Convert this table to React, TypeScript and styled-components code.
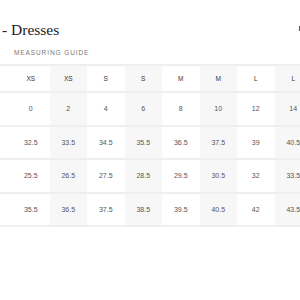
import React from "react";
import styled, { createGlobalStyle } from "styled-components";

const Global = createGlobalStyle`
	html, body {
		margin: 0;
		padding: 0;
		background: #ffffff;
		width: 300px;
		height: 300px;
		overflow: hidden;
	}
`;

const Page = styled.div`
	width: 300px;
	height: 300px;
	overflow: hidden;
	font-family: "Liberation Sans", Arial, sans-serif;
`;

const Head = styled.div`
	display: flex;
	justify-content: space-between;
	align-items: flex-start;
	padding: 20px 0 0 2px;
`;

const Title = styled.h1`
	margin: 0;
	font-family: "Liberation Serif", "Times New Roman", serif;
	font-weight: normal;
	font-size: 15.5px;
	line-height: 20px;
	color: #222;
`;

const Close = styled.span`
	display: block;
	width: 1px;
	height: 5px;
	margin-top: 6px;
	background: #555;
`;

const Guide = styled.div`
	margin: 9px 0 0 14px;
	font-size: 6.5px;
	letter-spacing: 0.9px;
	line-height: 8px;
	color: #777;
`;

const Scroller = styled.div`
	margin-top: 7px;
	width: 300px;
	overflow: hidden;
`;

const Table = styled.table`
	border-collapse: collapse;
	table-layout: fixed;
	width: 312px;
	border-top: 2px solid #efefef;
`;

const Row = styled.tr<{ $head?: boolean }>`
	height: ${(p) => (p.$head ? "27px" : "33.5px")};
	border-bottom: 2px solid #efefef;
`;

const Lead = styled.td`
	width: 12px;
	padding: 0;
`;

const Cell = styled.td<{ $shade?: boolean; $head?: boolean }>`
	width: 37.5px;
	padding: 0;
	text-align: center;
	vertical-align: middle;
	background: ${(p) => (p.$shade ? "#f7f7f7" : "#ffffff")};
	font-size: ${(p) => (p.$head ? "6.5px" : "7px")};
	font-weight: normal;
	color: ${(p) => (p.$head ? "#333" : "#555")};
`;

const sizes = ["XS", "XS", "S", "S", "M", "M", "L", "L"];
const rows = [
	["0", "2", "4", "6", "8", "10", "12", "14"],
	["32.5", "33.5", "34.5", "35.5", "36.5", "37.5", "39", "40.5"],
	["25.5", "26.5", "27.5", "28.5", "29.5", "30.5", "32", "33.5"],
	["35.5", "36.5", "37.5", "38.5", "39.5", "40.5", "42", "43.5"],
];

export default function App() {
	return (
		<Page>
			<Global />
			<Head>
				<Title>- Dresses</Title>
				<Close />
			</Head>
			<Guide>MEASURING GUIDE</Guide>
			<Scroller>
				<Table>
					<tbody>
						<Row $head>
							<Lead />
							{sizes.map((s, i) => (
								<Cell key={i} $head $shade={i % 2 === 1}>
									{s}
								</Cell>
							))}
						</Row>
						{rows.map((r, ri) => (
							<Row key={ri}>
								<Lead />
								{r.map((v, i) => (
									<Cell key={i} $shade={i % 2 === 1}>
										{v}
									</Cell>
								))}
							</Row>
						))}
					</tbody>
				</Table>
			</Scroller>
		</Page>
	);
}
